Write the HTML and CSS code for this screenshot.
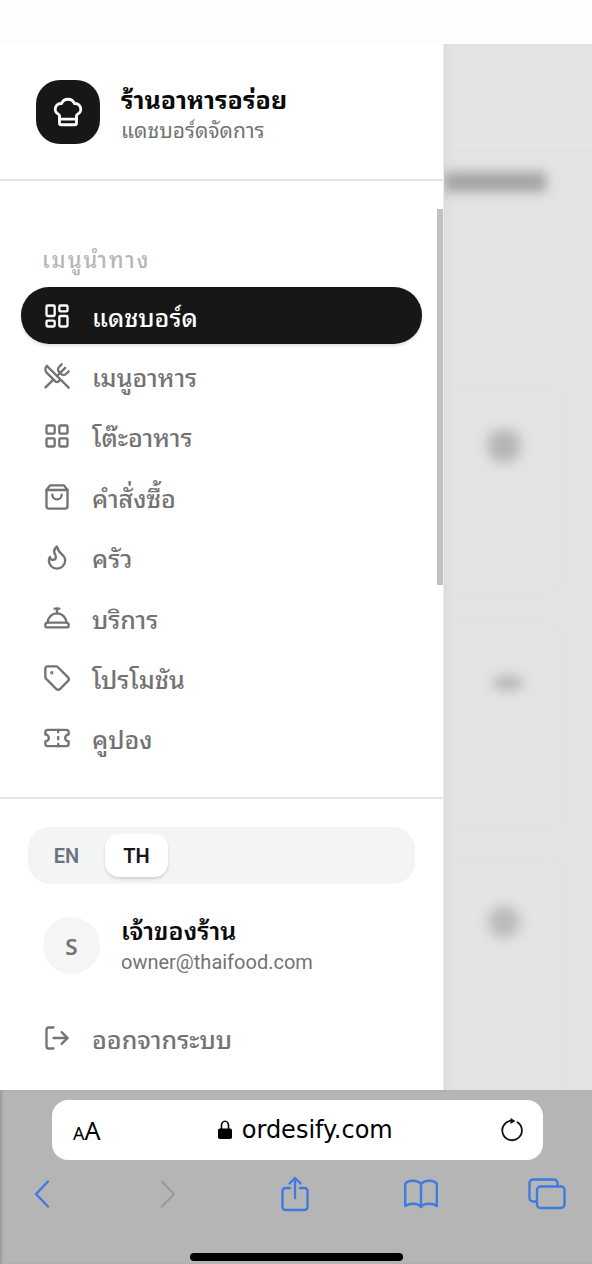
FILE: index.html
```html
<!DOCTYPE html>
<html lang="th">
<head>
<meta charset="utf-8">
<meta name="viewport" content="width=device-width, initial-scale=1">
<title>ร้านอาหารอร่อย</title>
<link rel="stylesheet" href="styles.css">
</head>
<body>
<div class="status-bar"></div>
<div class="stage">
  <aside class="drawer">
    <header class="brand">
      <span class="brand-logo">
        <svg class="logo-icon" viewBox="0 0 24 24" aria-hidden="true"><path d="M17 21a1 1 0 0 0 1-1v-5.35c0-.457.316-.844.727-1.041a4 4 0 0 0-2.134-7.589 5 5 0 0 0-9.186 0 4 4 0 0 0-2.134 7.588c.411.198.727.585.727 1.041V20a1 1 0 0 0 1 1Z"/><path d="M6 17h12"/></svg>
      </span>
      <div class="brand-text">
        <h1 class="brand-name">ร้านอาหารอร่อย</h1>
        <p class="brand-sub">แดชบอร์ดจัดการ</p>
      </div>
    </header>
    <nav class="menu" aria-labelledby="menu-label">
      <h2 class="menu-label" id="menu-label">เมนูนำทาง</h2>
      <div class="menu-list">
        <a class="item active" href="#" aria-current="page"><svg class="icon" viewBox="0 0 24 24" aria-hidden="true"><rect width="7" height="9" x="3" y="3" rx="1"/><rect width="7" height="5" x="14" y="3" rx="1"/><rect width="7" height="9" x="14" y="12" rx="1"/><rect width="7" height="5" x="3" y="16" rx="1"/></svg>แดชบอร์ด</a>
        <a class="item" href="#"><svg class="icon" viewBox="0 0 24 24" aria-hidden="true"><path d="m16 2-2.3 2.3a3 3 0 0 0 0 4.2l1.8 1.8a3 3 0 0 0 4.2 0L22 8"/><path d="M15 15 3.3 3.3a4.2 4.2 0 0 0 0 6l7.3 7.3c.7.7 2 .7 2.8 0L15 15Zm0 0 7 7"/><path d="m2.1 21.8 6.4-6.3"/><path d="m19 5-7 7"/></svg>เมนูอาหาร</a>
        <a class="item" href="#"><svg class="icon" viewBox="0 0 24 24" aria-hidden="true"><rect width="7" height="7" x="3" y="3" rx="1"/><rect width="7" height="7" x="14" y="3" rx="1"/><rect width="7" height="7" x="14" y="14" rx="1"/><rect width="7" height="7" x="3" y="14" rx="1"/></svg>โต๊ะอาหาร</a>
        <a class="item" href="#"><svg class="icon" viewBox="0 0 24 24" aria-hidden="true"><path d="M6 2 3 6v14a2 2 0 0 0 2 2h14a2 2 0 0 0 2-2V6l-3-4Z"/><path d="M3 6h18"/><path d="M16 10a4 4 0 0 1-8 0"/></svg>คำสั่งซื้อ</a>
        <a class="item" href="#"><svg class="icon" viewBox="0 0 24 24" aria-hidden="true"><path d="M8.5 14.5A2.5 2.5 0 0 0 11 12c0-1.38-.5-2-1-3-1.072-2.143-.224-4.054 2-6 .5 2.5 2 4.9 4 6.5 2 1.6 3 3.5 3 5.5a7 7 0 1 1-14 0c0-1.153.433-2.294 1-3a2.5 2.5 0 0 0 2.5 2.5z"/></svg>ครัว</a>
        <a class="item" href="#"><svg class="icon" viewBox="0 0 24 24" aria-hidden="true"><path d="M3 20a1 1 0 0 1-1-1v-1a2 2 0 0 1 2-2h16a2 2 0 0 1 2 2v1a1 1 0 0 1-1 1Z"/><path d="M20 16a8 8 0 1 0-16 0"/><path d="M12 4v4"/><path d="M10 4h4"/></svg>บริการ</a>
        <a class="item" href="#"><svg class="icon" viewBox="0 0 24 24" aria-hidden="true"><path d="M12.586 2.586A2 2 0 0 0 11.172 2H4a2 2 0 0 0-2 2v7.172a2 2 0 0 0 .586 1.414l8.704 8.704a2.426 2.426 0 0 0 3.42 0l6.58-6.58a2.426 2.426 0 0 0 0-3.42z"/><circle cx="7.5" cy="7.5" r=".5" fill="currentColor"/></svg>โปรโมชัน</a>
        <a class="item" href="#"><svg class="icon" viewBox="0 0 24 24" aria-hidden="true"><path d="M2 9a3 3 0 0 1 0 6v2a2 2 0 0 0 2 2h16a2 2 0 0 0 2-2v-2a3 3 0 0 1 0-6V7a2 2 0 0 0-2-2H4a2 2 0 0 0-2 2Z"/><path d="M13 5v2"/><path d="M13 17v2"/><path d="M13 11v2"/></svg>คูปอง</a>
      </div>
      <span class="scroll-thumb"></span>
    </nav>
    <footer class="account">
      <div class="lang" role="group" aria-label="ภาษา">
        <button class="lang-btn" type="button">EN</button>
        <button class="lang-btn selected" type="button" aria-pressed="true">TH</button>
      </div>
      <div class="user">
        <span class="avatar">S</span>
        <div class="user-text">
          <p class="user-name">เจ้าของร้าน</p>
          <p class="user-mail">owner@thaifood.com</p>
        </div>
      </div>
      <button class="logout" type="button"><svg class="icon" viewBox="0 0 24 24" aria-hidden="true"><path d="M9 21H5a2 2 0 0 1-2-2V5a2 2 0 0 1 2-2h4"/><path d="m16 17 5-5-5-5"/><path d="M21 12H9"/></svg>ออกจากระบบ</button>
    </footer>
  </aside>
  <div class="backdrop" aria-hidden="true">
    <div class="dim-bar"></div>
    <div class="dim-title"><span class="smudge wide"></span></div>
    <div class="dim-cards">
      <div class="dim-card"><span class="smudge square"></span></div>
      <div class="dim-card"><span class="smudge trend"></span></div>
      <div class="dim-card last"><span class="smudge round"></span></div>
    </div>
  </div>
</div>
<div class="browser">
  <div class="address">
    <button class="text-size" type="button" aria-label="AA"><span class="small-a">A</span><span class="big-a">A</span></button>
    <div class="site">
      <svg class="lock" viewBox="0 0 14 20" aria-hidden="true"><path d="M3.5 9V5.5a3.5 4.2 0 0 1 7 0V9" fill="none" stroke="#000" stroke-width="1.6"/><rect x="0" y="8.5" width="14" height="10.5" rx="1.8"/></svg>
      <span>ordesify.com</span>
    </div>
    <button class="reload-btn" type="button" aria-label="โหลดใหม่"><svg class="reload" viewBox="0 0 24 24" aria-hidden="true"><path d="M17.4 4.200A9.800 9.800 0 1 1 11 2.700" fill="none" stroke="#111" stroke-width="1.8" stroke-linecap="round"/><path d="M10.500 0 15.500 3l-5 3z" fill="#111"/></svg></button>
  </div>
  <div class="toolbar">
    <button class="tool" type="button" aria-label="ย้อนกลับ"><svg class="chev" viewBox="0 0 16 30" aria-hidden="true"><path d="M14 2.500 2 15l12 12.500"/></svg></button>
    <button class="tool" type="button" aria-label="ไปข้างหน้า" disabled><svg class="chev off" viewBox="0 0 16 30" aria-hidden="true"><path d="m2 2.500 12 12.500L2 27.500"/></svg></button>
    <button class="tool" type="button" aria-label="แชร์"><svg class="share" viewBox="0 0 28 36" aria-hidden="true"><path d="M9 12H4.500A3 3 0 0 0 1.500 15v16a3 3 0 0 0 3 3h19a3 3 0 0 0 3-3V15a3 3 0 0 0-3-3H19M14 22V2M8.500 7.500 14 2l5.500 5.500"/></svg></button>
    <button class="tool" type="button" aria-label="บุ๊กมาร์ก"><svg class="book" viewBox="0 0 34 30" aria-hidden="true"><path d="M17 5.500C14.500 1 5 .5 1.200 4.500V27c4.300-3 12.800-3.200 15.800 1 3-4.200 11.500-4 15.800-1V4.500C29 .5 19.500 1 17 5.500ZM17 5.500V28"/></svg></button>
    <button class="tool" type="button" aria-label="แท็บ"><svg class="tabs" viewBox="0 0 38 32" aria-hidden="true"><path d="M8.500 23.500H5a3.500 3.500 0 0 1-3.500-3.500V5A3.500 3.500 0 0 1 5 1.500h21A3.500 3.500 0 0 1 29.500 5v3.500"/><rect x="9" y="8.500" width="27.500" height="21.500" rx="3.500"/></svg></button>
  </div>
  <div class="home"></div>
</div>
</body>
</html>
```
FILE: styles.css
```css
* { box-sizing: border-box; }
html, body { height: 100%; }
body {
  margin: 0;
  display: flex;
  flex-direction: column;
  min-height: 100vh;
  background: #fff;
  color: #0a0a0a;
  font-family: "Noto Sans Thai Looped", Sarabun, "Noto Sans", sans-serif;
}
h1, h2, p { margin: 0; }
button { border: 0; padding: 0; background: none; color: inherit; font: inherit; }
a { color: inherit; text-decoration: none; }
svg { display: block; flex: none; }

.status-bar { height: 44px; flex: none; background: #fffcfd; }
.stage { flex: 1; display: flex; min-height: 0; }

.drawer { width: 75%; flex: none; display: flex; flex-direction: column; background: #fff; border-right: 1px solid #ececec; }
.brand { display: flex; align-items: center; gap: 21px; height: 137px; padding: 0 36px; border-bottom: 2px solid #e5e5e5; }
.brand-logo { display: grid; place-items: center; width: 64px; height: 64px; border-radius: 24px; background: #171717; color: #fff; }
.logo-icon { width: 34px; height: 34px; fill: none; stroke: currentColor; stroke-width: 2; stroke-linecap: round; stroke-linejoin: round; }
.brand-name { font-size: 25px; line-height: 34px; font-weight: 700; }
.brand-sub { font-size: 21px; line-height: 28px; color: #737373; }

.menu { position: relative; flex: 1; display: flex; flex-direction: column; padding: 63px 21px 30px; }
.menu-label { height: 43px; padding: 0 21px; font-size: 22px; line-height: 28px; font-weight: 500; letter-spacing: 2px; color: #b5b5b5; }
.menu-list { flex: 1; display: flex; flex-direction: column; justify-content: space-between; }
.item, .logout { display: flex; align-items: center; gap: 21px; width: 100%; height: 57px; padding: 0 22px; border-radius: 28px; font-size: 25px; line-height: 32px; font-weight: 500; color: #737373; text-align: left; }
.item.active { background: #171717; color: #fff; box-shadow: 0 2px 3px rgba(0, 0, 0, 0.12); }
.icon { width: 28px; height: 28px; fill: none; stroke: currentColor; stroke-width: 2; stroke-linecap: round; stroke-linejoin: round; }
.scroll-thumb { position: absolute; top: 28px; right: 0; width: 6px; height: 376px; background: #c1c1c1; }

.account { padding: 28px 28px 24px 21px; border-top: 2px solid #e5e5e5; }
.lang { display: flex; align-items: center; gap: 7px; height: 57px; margin-left: 7px; padding: 7px; border-radius: 22px; background: #f3f4f6; }
.lang-btn { width: 63px; height: 43px; border-radius: 14px; font-family: Roboto, sans-serif; font-size: 20px; font-weight: 600; color: #6b7280; }
.lang-btn.selected { background: #fff; color: #171717; box-shadow: 0 2px 3px rgba(0, 0, 0, 0.14); }
.user { display: flex; align-items: center; gap: 21px; padding: 28px 22px 31px; }
.avatar { display: grid; place-items: center; width: 57px; height: 57px; border-radius: 50%; background: #f5f5f5; color: #737373; font-size: 22px; font-weight: 600; }
.user-name { font-size: 25px; line-height: 34px; font-weight: 600; }
.user-mail { font-family: Roboto, sans-serif; font-size: 20px; line-height: 32px; color: #737373; }

.backdrop { flex: 1; min-width: 0; overflow: hidden; background: #e4e4e4; box-shadow: inset 8px 0 10px -6px #d8d8d8; display: flex; flex-direction: column; }
.dim-bar { height: 108px; border-bottom: 2px solid #e1e1e1; flex: none; }
.dim-title { height: 232px; padding-top: 20px; flex: none; }
.dim-cards { flex: 1; display: flex; flex-direction: column; gap: 28px; padding-right: 28px; filter: blur(2px); }
.dim-card { height: 210px; padding: 43px 44px; border: 3px solid #e1e1e1; border-left: 0; border-radius: 0 12px 12px 0; }
.dim-card.last { flex: 1; border-bottom: 0; border-bottom-right-radius: 0; }
.smudge { display: block; filter: blur(6px); }
.smudge.wide { width: 102px; height: 20px; background: #a3a3a3; }
.smudge.square { width: 32px; height: 32px; border-radius: 12px; background: #b5b5b5; }
.smudge.trend { width: 32px; height: 14px; margin: 8px 0 0 4px; border-radius: 50%; background: #b2b2b2; }
.smudge.round { width: 32px; height: 32px; border-radius: 50%; background: #bababa; }

.browser { flex: none; padding: 10px 23px 3px; background: #b5b5b5; box-shadow: inset 3px 0 3px -1px #999; }
.address { display: flex; align-items: center; justify-content: space-between; height: 60px; margin: 0 26px 0 29px; padding: 0 19px 0 21px; border-radius: 16px; background: #fff; color: #000; }
.text-size { display: flex; align-items: baseline; font-family: "Noto Sans", sans-serif; }
.small-a { font-size: 18px; }
.big-a { font-size: 25px; }
.site { display: flex; align-items: center; gap: 10px; padding-left: 10px; font-family: "DejaVu Sans", sans-serif; font-size: 24px; }
.lock { width: 14px; height: 20px; }
.reload { width: 24px; height: 24px; }
.toolbar { display: flex; align-items: center; justify-content: space-between; height: 68px; padding-right: 3px; }
.tool { display: grid; place-items: center; width: 38px; height: 38px; }
.toolbar svg { fill: none; stroke: #3f7ae0; stroke-width: 2.4; stroke-linecap: round; stroke-linejoin: round; }
.chev { width: 16px; height: 30px; }
.toolbar .off { stroke: #9b9b9b; }
.share { width: 28px; height: 36px; }
.book { width: 34px; height: 30px; }
.tabs { width: 38px; height: 32px; }
.home { width: 213px; height: 8px; margin: 25px auto 0; border-radius: 4px; background: #000; }
```
